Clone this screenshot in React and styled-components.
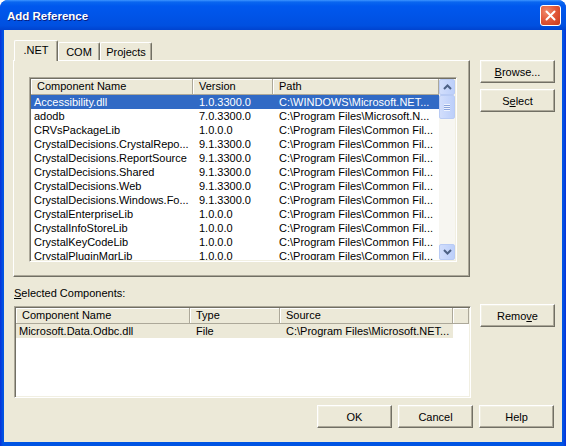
import React from 'react';
import styled, { createGlobalStyle } from 'styled-components';

const GlobalStyle = createGlobalStyle`
  html, body {
    margin: 0;
    padding: 0;
    background: #ffffff;
  }
  body {
    font-family: "Liberation Sans", Arial, sans-serif;
    font-size: 11px;
    color: #000000;
  }
`;

const StyledWindow = styled.div`
  width: 566px;
  height: 446px;
  display: flex;
  flex-direction: column;
  box-sizing: border-box;
  border-radius: 8px 8px 0 0;
  background: linear-gradient(to right, #0831d9 0, #0054e3 3px, #0054e3 563px, #0831d9 566px);
  overflow: hidden;
`;

const StyledTitleBar = styled.div`
  height: 30px;
  flex: none;
  display: flex;
  align-items: center;
  justify-content: space-between;
  padding: 0 5px 0 7px;
  box-sizing: border-box;
  background: linear-gradient(
    to bottom,
    #3d95ff 0,
    #0a66f0 2px,
    #0058ee 6px,
    #0054e8 50%,
    #0050e0 85%,
    #0043cf 100%
  );
`;

const StyledTitle = styled.span`
  color: #ffffff;
  font-weight: bold;
  font-size: 11.5px;
  text-shadow: 1px 1px 0 #0a1f80;
  margin-top: 2px;
`;

const StyledCloseButton = styled.div`
  width: 21px;
  height: 21px;
  box-sizing: border-box;
  border: 1px solid #ffffff;
  border-radius: 3px;
  background: radial-gradient(circle at 30% 30%, #f08a6c 0, #e35a3b 45%, #c8381a 100%);
  display: flex;
  align-items: center;
  justify-content: center;
  margin-top: 1px;
`;

const StyledClient = styled.div`
  flex: 1;
  margin: 0 4px 4px;
  background: #ece9d8;
  padding: 10px 8px 0 9px;
  display: flex;
  flex-direction: column;
`;

const StyledTopRow = styled.div`
  display: flex;
  align-items: flex-start;
  gap: 10px;
`;

const StyledTabControl = styled.div`
  width: 457px;
  display: flex;
  flex-direction: column;
`;

const StyledTabStrip = styled.div`
  height: 20px;
  display: flex;
  align-items: flex-end;
  padding-left: 1px;
  position: relative;
  z-index: 1;
`;

const StyledTab = styled.div`
  width: ${(p) => p.$w}px;
  height: ${(p) => (p.$active ? 21 : 18)}px;
  margin-bottom: ${(p) => (p.$active ? -1 : 0)}px;
  box-sizing: border-box;
  border-top: 1px solid #ffffff;
  border-left: 1px solid #ffffff;
  border-right: 1px solid #716f64;
  border-radius: 2px 2px 0 0;
  box-shadow: inset -1px 0 0 #aca899;
  background: #ece9d8;
  display: flex;
  align-items: ${(p) => (p.$active ? 'flex-start' : 'center')};
  padding-top: ${(p) => (p.$active ? 3 : 0)}px;
  justify-content: center;
`;

const StyledTabPanel = styled.div`
  height: 217px;
  box-sizing: border-box;
  border-style: solid;
  border-width: 1px;
  border-color: #ffffff #716f64 #716f64 #ffffff;
  box-shadow: inset -1px -1px 0 #aca899;
  padding: 16px 12px 14px 15px;
`;

const StyledListView = styled.div`
  width: ${(p) => p.$w}px;
  height: ${(p) => p.$h}px;
  box-sizing: border-box;
  border-style: solid;
  border-width: 1px;
  border-color: #aca899 #ffffff #ffffff #aca899;
  box-shadow: inset 1px 1px 0 #716f64, inset -1px -1px 0 #f1efe2;
  padding: 1px;
  background: #ffffff;
  display: flex;
  overflow: hidden;
`;

const StyledListBody = styled.div`
  flex: 1;
  min-width: 0;
  overflow: hidden;
`;

const StyledHeaderRow = styled.div`
  display: flex;
  height: 16px;
`;

const StyledHeaderCell = styled.div`
  width: ${(p) => p.$w}px;
  flex: ${(p) => (p.$fill ? '1' : 'none')};
  box-sizing: border-box;
  background: #ece9d8;
  border-right: 1px solid #aca899;
  border-bottom: 1px solid #aca899;
  box-shadow: inset 1px 1px 0 #ffffff;
  padding-left: 6px;
  line-height: 15px;
  white-space: nowrap;
  overflow: hidden;
`;

const StyledRow = styled.div`
  display: flex;
  height: 14px;
  width: ${(p) => (p.$w ? `${p.$w}px` : 'auto')};
  background: ${(p) => (p.$selected ? '#316ac5' : p.$dim ? '#ece9d8' : 'transparent')};
  color: ${(p) => (p.$selected ? '#ffffff' : '#000000')};
`;

const StyledCell = styled.div`
  width: ${(p) => p.$w}px;
  flex: none;
  box-sizing: border-box;
  padding-left: ${(p) => (p.$first ? 3 : 6)}px;
  line-height: 14px;
  white-space: nowrap;
  overflow: hidden;
`;

const StyledScrollbar = styled.div`
  width: 16px;
  flex: none;
  display: flex;
  flex-direction: column;
  background: #f7f6f1;
`;

const StyledScrollButton = styled.div`
  height: ${(p) => p.$h}px;
  box-sizing: border-box;
  border: 1px solid #b9cbf4;
  border-radius: 2px;
  background: linear-gradient(to right, #d2defc, #bccffa);
  display: flex;
  align-items: center;
  justify-content: center;
  flex: none;
`;

const StyledTrack = styled.div`
  flex: 1;
`;

const StyledGrip = styled.div`
  width: 6px;
  height: 7px;
  background: repeating-linear-gradient(
    to bottom,
    #eef3fe 0,
    #eef3fe 1px,
    #8ca5dc 1px,
    #8ca5dc 2px
  );
`;

const StyledButtonColumn = styled.div`
  display: flex;
  flex-direction: column;
  gap: 6px;
  margin-top: ${(p) => p.$top}px;
`;

const StyledButton = styled.button`
  width: 75px;
  height: 23px;
  box-sizing: border-box;
  padding: 0;
  font-family: inherit;
  font-size: 11px;
  color: #000000;
  background: #ece9d8;
  border-style: solid;
  border-width: 1px;
  border-color: #ffffff #716f64 #716f64 #ffffff;
  box-shadow: inset -1px -1px 0 #aca899, inset 1px 1px 0 #f1efe2;
  cursor: default;
`;

const StyledLabel = styled.div`
  line-height: 13px;
  margin: 10px 0 6px 1px;
`;

const StyledBottomRow = styled.div`
  display: flex;
  align-items: flex-start;
  gap: 9px;
`;

const StyledColumn = styled.div`
  display: flex;
  flex-direction: column;
`;

const StyledListOffset = styled.div`
  margin-left: 1px;
`;

const StyledFooter = styled.div`
  display: flex;
  justify-content: flex-end;
  gap: 6px;
  margin-top: 7px;
`;

const Key = styled.u`
  text-decoration: underline;
`;

const components = [
  ['Accessibility.dll', '1.0.3300.0', 'C:\\WINDOWS\\Microsoft.NET...'],
  ['adodb', '7.0.3300.0', 'C:\\Program Files\\Microsoft.N...'],
  ['CRVsPackageLib', '1.0.0.0', 'C:\\Program Files\\Common Fil...'],
  ['CrystalDecisions.CrystalRepo...', '9.1.3300.0', 'C:\\Program Files\\Common Fil...'],
  ['CrystalDecisions.ReportSource', '9.1.3300.0', 'C:\\Program Files\\Common Fil...'],
  ['CrystalDecisions.Shared', '9.1.3300.0', 'C:\\Program Files\\Common Fil...'],
  ['CrystalDecisions.Web', '9.1.3300.0', 'C:\\Program Files\\Common Fil...'],
  ['CrystalDecisions.Windows.Fo...', '9.1.3300.0', 'C:\\Program Files\\Common Fil...'],
  ['CrystalEnterpriseLib', '1.0.0.0', 'C:\\Program Files\\Common Fil...'],
  ['CrystalInfoStoreLib', '1.0.0.0', 'C:\\Program Files\\Common Fil...'],
  ['CrystalKeyCodeLib', '1.0.0.0', 'C:\\Program Files\\Common Fil...'],
  ['CrystalPluginMgrLib', '1.0.0.0', 'C:\\Program Files\\Common Fil...'],
];

const topCols = [162, 80, 166];
const bottomCols = [174, 90, 173];

const Chevron = ({ up }) => (
  <svg width="9" height="6" viewBox="0 0 9 6">
    <polyline
      points={up ? '1,5 4.5,1.5 8,5' : '1,1 4.5,4.5 8,1'}
      fill="none"
      stroke="#4d6185"
      strokeWidth="2"
    />
  </svg>
);

const CloseGlyph = () => (
  <svg width="11" height="11" viewBox="0 0 11 11">
    <path d="M1.5 1.5 L9.5 9.5 M9.5 1.5 L1.5 9.5" stroke="#ffffff" strokeWidth="2" strokeLinecap="round" />
  </svg>
);

const Scrollbar = () => (
  <StyledScrollbar>
    <StyledScrollButton $h={16}>
      <Chevron up />
    </StyledScrollButton>
    <StyledScrollButton $h={24}>
      <StyledGrip />
    </StyledScrollButton>
    <StyledTrack />
    <StyledScrollButton $h={16}>
      <Chevron />
    </StyledScrollButton>
  </StyledScrollbar>
);

export default function App() {
  return (
    <>
      <GlobalStyle />
      <StyledWindow>
        <StyledTitleBar>
          <StyledTitle>Add Reference</StyledTitle>
          <StyledCloseButton>
            <CloseGlyph />
          </StyledCloseButton>
        </StyledTitleBar>
        <StyledClient>
          <StyledTopRow>
            <StyledTabControl>
              <StyledTabStrip>
                <StyledTab $w={44} $active>.NET</StyledTab>
                <StyledTab $w={42}>COM</StyledTab>
                <StyledTab $w={52}>Projects</StyledTab>
              </StyledTabStrip>
              <StyledTabPanel>
                <StyledListView $w={428} $h={185}>
                  <StyledListBody>
                    <StyledHeaderRow>
                      <StyledHeaderCell $w={topCols[0]}>Component Name</StyledHeaderCell>
                      <StyledHeaderCell $w={topCols[1]}>Version</StyledHeaderCell>
                      <StyledHeaderCell $w={topCols[2]}>Path</StyledHeaderCell>
                    </StyledHeaderRow>
                    {components.map((row, i) => (
                      <StyledRow key={row[0]} $selected={i === 0}>
                        {row.map((text, j) => (
                          <StyledCell key={j} $w={topCols[j]} $first={j === 0}>
                            {text}
                          </StyledCell>
                        ))}
                      </StyledRow>
                    ))}
                  </StyledListBody>
                  <Scrollbar />
                </StyledListView>
              </StyledTabPanel>
            </StyledTabControl>
            <StyledButtonColumn $top={20}>
              <StyledButton>
                <Key>B</Key>rowse...
              </StyledButton>
              <StyledButton>
                S<Key>e</Key>lect
              </StyledButton>
            </StyledButtonColumn>
          </StyledTopRow>

          <StyledBottomRow>
            <StyledColumn>
              <StyledLabel>
                <Key>S</Key>elected Components:
              </StyledLabel>
              <StyledListOffset>
                <StyledListView $w={457} $h={92}>
                  <StyledListBody>
                    <StyledHeaderRow>
                      <StyledHeaderCell $w={bottomCols[0]}>Component Name</StyledHeaderCell>
                      <StyledHeaderCell $w={bottomCols[1]}>Type</StyledHeaderCell>
                      <StyledHeaderCell $w={bottomCols[2]}>Source</StyledHeaderCell>
                      <StyledHeaderCell $fill />
                    </StyledHeaderRow>
                    <StyledRow $dim $w={bottomCols[0] + bottomCols[1] + bottomCols[2]}>
                      <StyledCell $w={bottomCols[0]} $first>Microsoft.Data.Odbc.dll</StyledCell>
                      <StyledCell $w={bottomCols[1]}>File</StyledCell>
                      <StyledCell $w={bottomCols[2]}>C:\Program Files\Microsoft.NET...</StyledCell>
                    </StyledRow>
                  </StyledListBody>
                </StyledListView>
              </StyledListOffset>
            </StyledColumn>
            <StyledButtonColumn $top={27}>
              <StyledButton>
                Remo<Key>v</Key>e
              </StyledButton>
            </StyledButtonColumn>
          </StyledBottomRow>

          <StyledFooter>
            <StyledButton>OK</StyledButton>
            <StyledButton>Cancel</StyledButton>
            <StyledButton>Help</StyledButton>
          </StyledFooter>
        </StyledClient>
      </StyledWindow>
    </>
  );
}
